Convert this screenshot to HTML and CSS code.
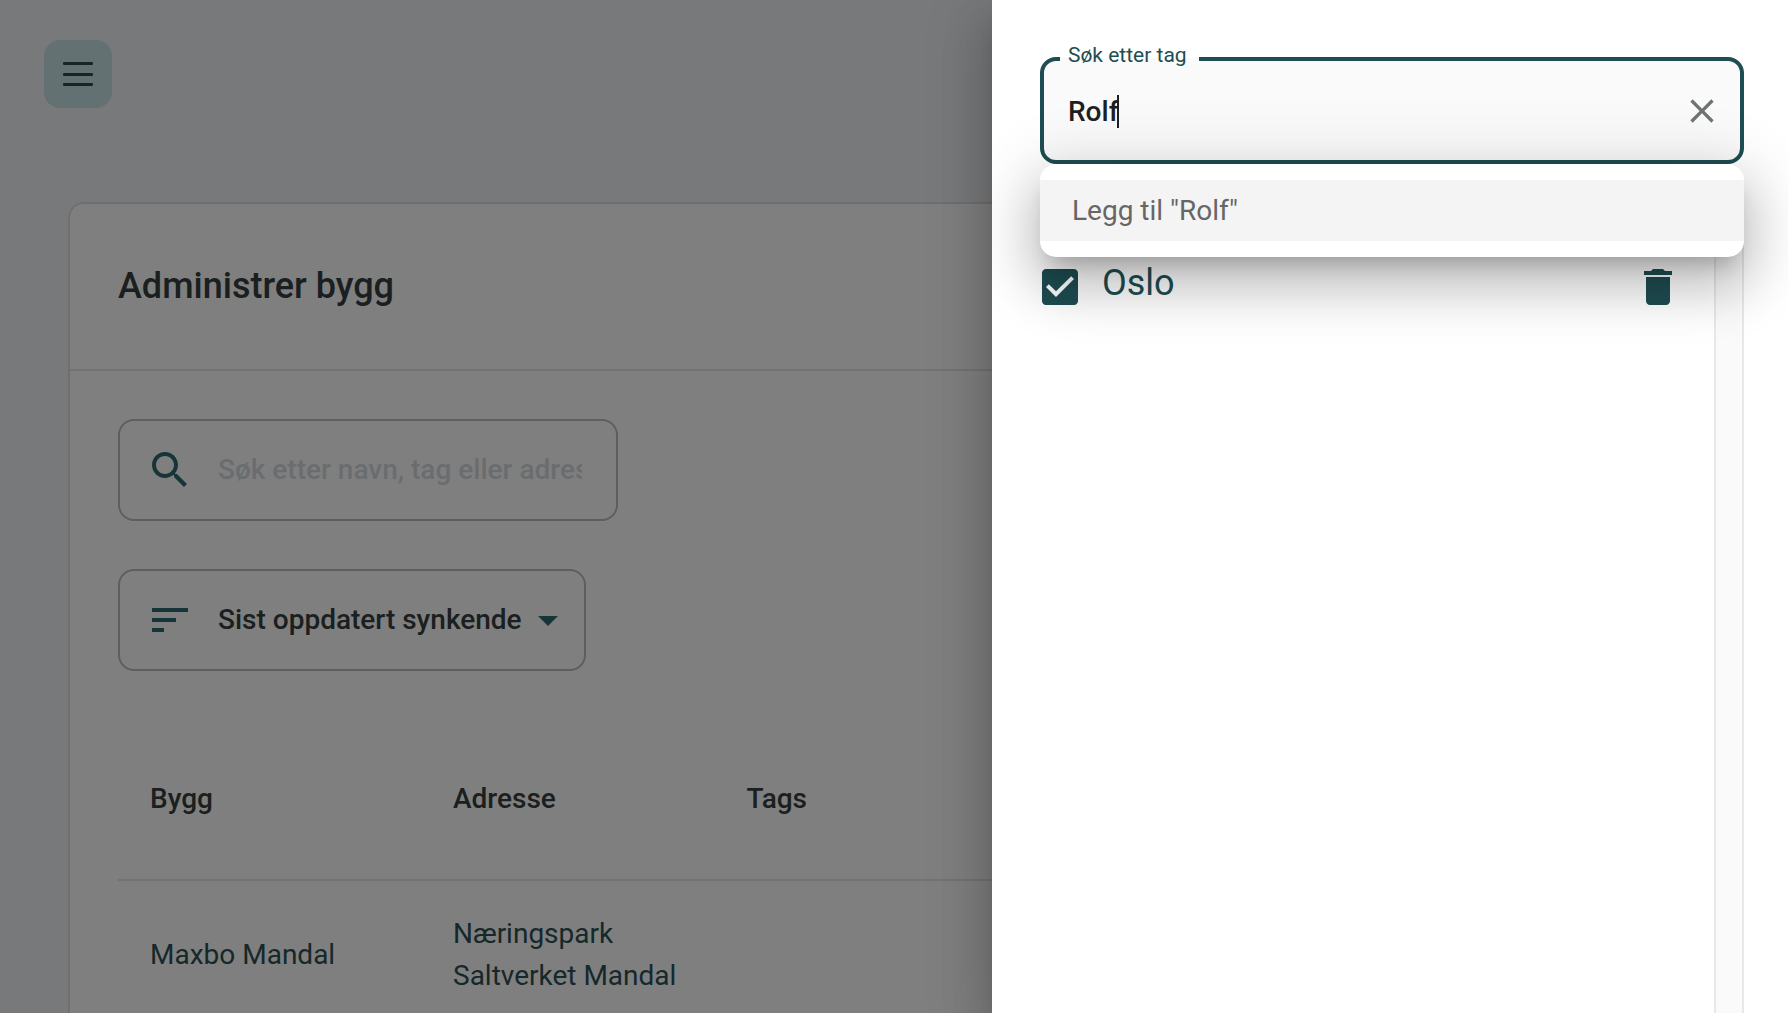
FILE: index.html
```html
<!DOCTYPE html>
<html lang="no">
<head>
<meta charset="utf-8">
<title>Administrer bygg</title>
<link rel="stylesheet" href="styles.css">
</head>
<body>
<div class="app">
  <header class="topbar">
    <button class="menu-button" aria-label="Meny"><span></span><span></span><span></span></button>
  </header>
  <main class="card">
    <div class="card-header"><h1>Administrer bygg</h1></div>
    <div class="card-body">
      <div class="field field-search">
        <svg class="icon" viewBox="0 0 24 24"><path d="M15.5 14h-.79l-.28-.27C15.41 12.59 16 11.11 16 9.5 16 5.91 13.09 3 9.5 3S3 5.91 3 9.5 5.91 16 9.5 16c1.61 0 3.09-.59 4.23-1.57l.27.28v.79l5 4.99L20.49 19l-4.99-5zm-6 0C7.01 14 5 11.99 5 9.5S7.01 5 9.5 5 14 7.01 14 9.5 11.99 14 9.5 14z"/></svg>
        <span class="placeholder">Søk etter navn, tag eller adresse</span>
      </div>
      <div class="field field-sort">
        <svg class="icon" viewBox="0 0 24 24"><path d="M3 18h6v-2H3v2zM3 6v2h18V6H3zm0 7h12v-2H3v2z"/></svg>
        <span class="sort-value">Sist oppdatert synkende</span>
        <svg class="icon" viewBox="0 0 24 24"><path d="M7 10l5 5 5-5z"/></svg>
      </div>
      <div class="table">
        <div class="row head"><span>Bygg</span><span>Adresse</span><span>Tags</span></div>
        <div class="row"><span>Maxbo Mandal</span><span>Næringspark<br>Saltverket Mandal</span><span></span></div>
      </div>
    </div>
  </main>
</div>
<div class="backdrop"></div>
<aside class="drawer">
  <div class="textfield">
    <fieldset class="outline"><legend>Søk etter tag</legend></fieldset>
    <span class="label">Søk etter tag</span>
    <span class="value">Rolf</span><span class="caret"></span>
    <svg class="clear" viewBox="0 0 24 24"><path d="M19 6.41L17.59 5 12 10.59 6.41 5 5 6.41 10.59 12 5 17.59 6.41 19 12 13.41 17.59 19 19 17.59 13.41 12z"/></svg>
    <div class="popup"><div class="option">Legg til "Rolf"</div></div>
  </div>
  <div class="tag-list">
    <div class="tag">
      <svg class="icon" viewBox="0 0 24 24"><path d="M19 3H5c-1.11 0-2 .9-2 2v14c0 1.1.89 2 2 2h14c1.11 0 2-.9 2-2V5c0-1.1-.89-2-2-2zm-9 14l-5-5 1.41-1.41L10 14.17l7.59-7.59L19 8l-9 9z"/></svg>
      <span class="tag-name">Oslo</span>
      <svg class="icon" viewBox="0 0 24 24"><path d="M6 19c0 1.1.9 2 2 2h8c1.1 0 2-.9 2-2V7H6v12zM19 4h-3.5l-1-1h-5l-1 1H5v2h14V4z"/></svg>
    </div>
    <div class="track"></div>
  </div>
</aside>
</body>
</html>
```

FILE: styles.css
```css
* { box-sizing: border-box; }
body {
  margin: 0;
  height: 1013px;
  overflow: hidden;
  position: relative;
  font-family: Roboto, "Liberation Sans", sans-serif;
  font-size: 28px;
  line-height: 42px;
  color: #363e3e;
  background: #f0f2f5;
}
.app { display: flex; flex-direction: column; height: 1013px; overflow: hidden; }
.topbar { flex: none; height: 202px; padding: 40px 44px; }
.menu-button {
  width: 68px; height: 68px; padding: 0; border: 0; border-radius: 16px;
  background: #c8e2e6;
  display: flex; flex-direction: column; align-items: center; justify-content: center; gap: 7.5px;
}
.menu-button span { width: 30px; height: 3px; background: #2c4c50; border-radius: 1px; }
.card {
  flex: none; height: 900px; margin: 0 -20px 0 68px;
  background: #fff; border: 2px solid #dedede; border-radius: 16px;
}
.card-header {
  height: 167px; padding: 0 48px 2px; display: flex; align-items: center;
  border-bottom: 2px solid #e6e6e6;
}
h1 { margin: 0; font-size: 36px; line-height: 44px; font-weight: 500; }
.card-body { padding: 48px; display: flex; flex-direction: column; align-items: flex-start; gap: 48px; }
.field {
  height: 102px; display: flex; align-items: center; padding: 0 26px;
  border: 2px solid #bcbcbc; border-radius: 16px; font-weight: 500;
}
.field-search { width: 500px; padding-right: 34px; }
.field-sort { width: 468px; padding-right: 12px; }
.icon { width: 48px; height: 48px; flex: none; fill: #2e6a70; }
.placeholder { margin-left: 24px; flex: 1; overflow: hidden; white-space: nowrap; color: #d4dbe1; }
.sort-value { margin-left: 24px; flex: 1; white-space: nowrap; }
.table { align-self: stretch; }
.row {
  display: grid; grid-template-columns: 303px 293.4px 1fr; align-items: center;
  padding: 0 32px; height: 148px; color: #2c5054;
}
.head { height: 162px; font-weight: 500; color: #363e3e; border-bottom: 2px solid #e6e6e6; }
.backdrop { position: absolute; inset: 0; background: rgba(0, 0, 0, .5); }
.drawer {
  position: absolute; top: 0; right: 0; bottom: 0; width: 796px;
  padding: 58px 44px 0 48px; background: #fff;
  box-shadow: 0 16px 20px -10px rgba(0, 0, 0, .2), 0 32px 48px 4px rgba(0, 0, 0, .14), 0 12px 60px 10px rgba(0, 0, 0, .12);
}
.textfield {
  position: relative; height: 106px; display: flex; align-items: center;
  padding: 0 22px 0 28px; background: #fafafa; border-radius: 16px;
}
.outline {
  position: absolute; inset: -10px 0 0; margin: 0; padding: 0 16px;
  border: 4px solid #1e4d52; border-radius: 16px;
}
.outline legend { height: 22px; width: 139px; padding: 0; overflow: hidden; font-size: 21px; line-height: 22px; visibility: hidden; }
.label { position: absolute; left: 28px; top: -16px; font-size: 21px; line-height: 26px; color: #1e4d52; }
.value { padding-top: 2px; font-weight: 500; color: #1f1f1f; }
.caret { width: 2px; height: 33px; margin-left: -2px; background: #1f1f1f; }
.clear { width: 40px; height: 40px; margin-left: auto; fill: #6f7373; }
.popup {
  position: absolute; z-index: 2; left: 0; right: 0; top: 106px; padding: 16px 0;
  background: #fff; border-radius: 16px;
  box-shadow: 0 16px 20px -10px rgba(0, 0, 0, .2), 0 28px 50px 4px rgba(0, 0, 0, .15), 0 14px 66px 12px rgba(0, 0, 0, .14);
  clip-path: inset(-164px -44px -300px -48px);
}
.option { height: 61px; padding: 0 32px; line-height: 61px; color: #666; background: #f4f4f4; }
.tag-list { display: flex; height: 849px; position: relative; }
.tag { flex: 1; display: flex; align-items: flex-start; padding: 99px 32px 0 0; margin-left: -4px; }
.tag .icon { fill: #1e4d52; }
.tag-name { flex: 1; margin-left: 18px; margin-top: -2px; font-size: 36px; line-height: 44px; color: #1e4d52; }
.track { width: 30px; margin-top: 60px; background: #fafafa; border: solid #e8e8e8; border-width: 0 2px; }
```
